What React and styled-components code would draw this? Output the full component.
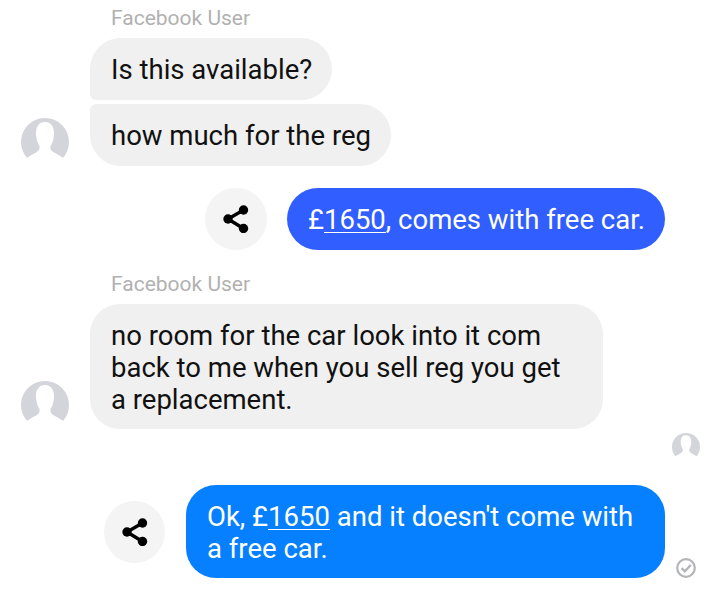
import React from 'react';
import styled, { createGlobalStyle } from 'styled-components';

const GlobalStyle = createGlobalStyle`
  html, body {
    margin: 0;
    padding: 0;
    background: #fff;
  }
  body {
    font-family: Roboto, "Noto Sans", sans-serif;
  }
`;

const Page = styled.div`
  width: 707px;
  height: 600px;
  overflow: hidden;
  display: flex;
  flex-direction: column;
`;

const SenderName = styled.div`
  height: 20px;
  margin: ${(p) => p.$top}px 0 10px 111px;
  font-size: 21px;
  line-height: 20px;
  color: #b1b1b1;
`;

const IncomingRow = styled.div`
  display: flex;
  align-items: flex-end;
  gap: 21px;
  padding-left: 21px;
`;

const AvatarSlot = styled.div`
  flex: none;
  width: 48px;
  height: 48px;
`;

const BubbleStack = styled.div`
  display: flex;
  flex-direction: column;
  align-items: flex-start;
  gap: 4px;
`;

const Bubble = styled.div`
  box-sizing: border-box;
  width: ${(p) => p.$width}px;
  min-height: 62px;
  padding: 16px 21px 13px;
  font-size: 27.5px;
  line-height: 32px;
  white-space: nowrap;
  border-radius: ${(p) => p.$radius || '31px'};
  background: ${(p) => p.$bg || '#f0f0f0'};
  color: ${(p) => (p.$bg ? '#fff' : '#111')};
`;

const OutgoingRow = styled.div`
  display: flex;
  align-items: ${(p) => p.$align || 'center'};
  justify-content: flex-end;
  gap: ${(p) => p.$gap}px;
  margin-top: ${(p) => p.$top}px;
  padding-right: ${(p) => p.$right}px;
`;

const ShareButton = styled.div`
  flex: none;
  width: ${(p) => p.$width || 62}px;
  height: 62px;
  margin-bottom: ${(p) => p.$bottom || 0}px;
  border-radius: 50%;
  background: #f4f4f4;
  display: flex;
  align-items: center;
  justify-content: center;
`;

const Amount = styled.span`
  text-decoration: underline;
  text-decoration-thickness: 1px;
  text-underline-offset: 3px;
`;

const SeenRow = styled.div`
  display: flex;
  justify-content: flex-end;
  margin-top: 4px;
  padding-right: 7px;
  height: 28px;
`;

const BubbleWithStatus = styled.div`
  display: flex;
  align-items: flex-end;
  gap: 11px;
`;

const StatusSlot = styled.div`
  width: 20px;
  height: 20px;
`;

const Avatar = ({ size = 48 }) => (
  <svg width={size} height={size} viewBox="0 0 48 48">
    <circle cx="24" cy="24" r="24" fill="#d3d5da" />
    <path
      d="M24 4C17 4 14.5 10 15 17C15.5 22 17 26 18.5 28C19 31 18 33 15 34.5C11 36.5 8 38 5 41L5 48L43 48L43 41C40 38 37 36.5 33 34.5C30 33 29 31 29.5 28C31 26 32.5 22 33 17C33.5 10 31 4 24 4Z"
      fill="#fff"
    />
  </svg>
);

const ShareIcon = () => (
  <svg width="28" height="28" viewBox="0 0 28 28">
    <path d="M21.5 5L6 14L21.5 23.5" fill="none" stroke="#000" strokeWidth="3.4" />
    <circle cx="21.5" cy="5" r="4.7" fill="#000" />
    <circle cx="6" cy="14" r="4.7" fill="#000" />
    <circle cx="21.5" cy="23.5" r="4.7" fill="#000" />
  </svg>
);

const CheckIcon = () => (
  <svg width="20" height="20" viewBox="0 0 20 20">
    <circle cx="10" cy="10" r="8.8" fill="none" stroke="#b4b5b8" strokeWidth="2.2" />
    <path d="M5.6 10.2L8.8 13.4L14.8 7" fill="none" stroke="#b4b5b8" strokeWidth="2.4" />
  </svg>
);

const App = () => {
  return (
    <>
      <GlobalStyle />
      <Page>
        <SenderName $top={8}>Facebook User</SenderName>
        <IncomingRow>
          <AvatarSlot>
            <Avatar />
          </AvatarSlot>
          <BubbleStack>
            <Bubble $width={242} $radius="31px 31px 31px 6px">Is this available?</Bubble>
            <Bubble $width={301} $radius="6px 31px 31px 31px">how much for the reg</Bubble>
          </BubbleStack>
        </IncomingRow>

        <OutgoingRow $gap={20} $top={22} $right={42}>
          <ShareButton>
            <ShareIcon />
          </ShareButton>
          <Bubble $width={378} $bg="#315eff">
            £<Amount>1650</Amount>, comes with free car.
          </Bubble>
        </OutgoingRow>

        <SenderName $top={24}>Facebook User</SenderName>
        <IncomingRow>
          <AvatarSlot>
            <Avatar />
          </AvatarSlot>
          <Bubble $width={513} $radius="30px">
            no room for the car look into it com
            <br />
            back to me when you sell reg you get
            <br />
            a replacement.
          </Bubble>
        </IncomingRow>

        <SeenRow>
          <Avatar size={28} />
        </SeenRow>

        <OutgoingRow $gap={21} $top={24} $right={11} $align="flex-end">
          <ShareButton $width={61} $bottom={15}>
            <ShareIcon />
          </ShareButton>
          <BubbleWithStatus>
            <Bubble $width={479} $bg="#0680ff" $radius="30px">
              Ok, £<Amount>1650</Amount> and it doesn't come with
              <br />
              a free car.
            </Bubble>
            <StatusSlot>
              <CheckIcon />
            </StatusSlot>
          </BubbleWithStatus>
        </OutgoingRow>
      </Page>
    </>
  );
};

export default App;
